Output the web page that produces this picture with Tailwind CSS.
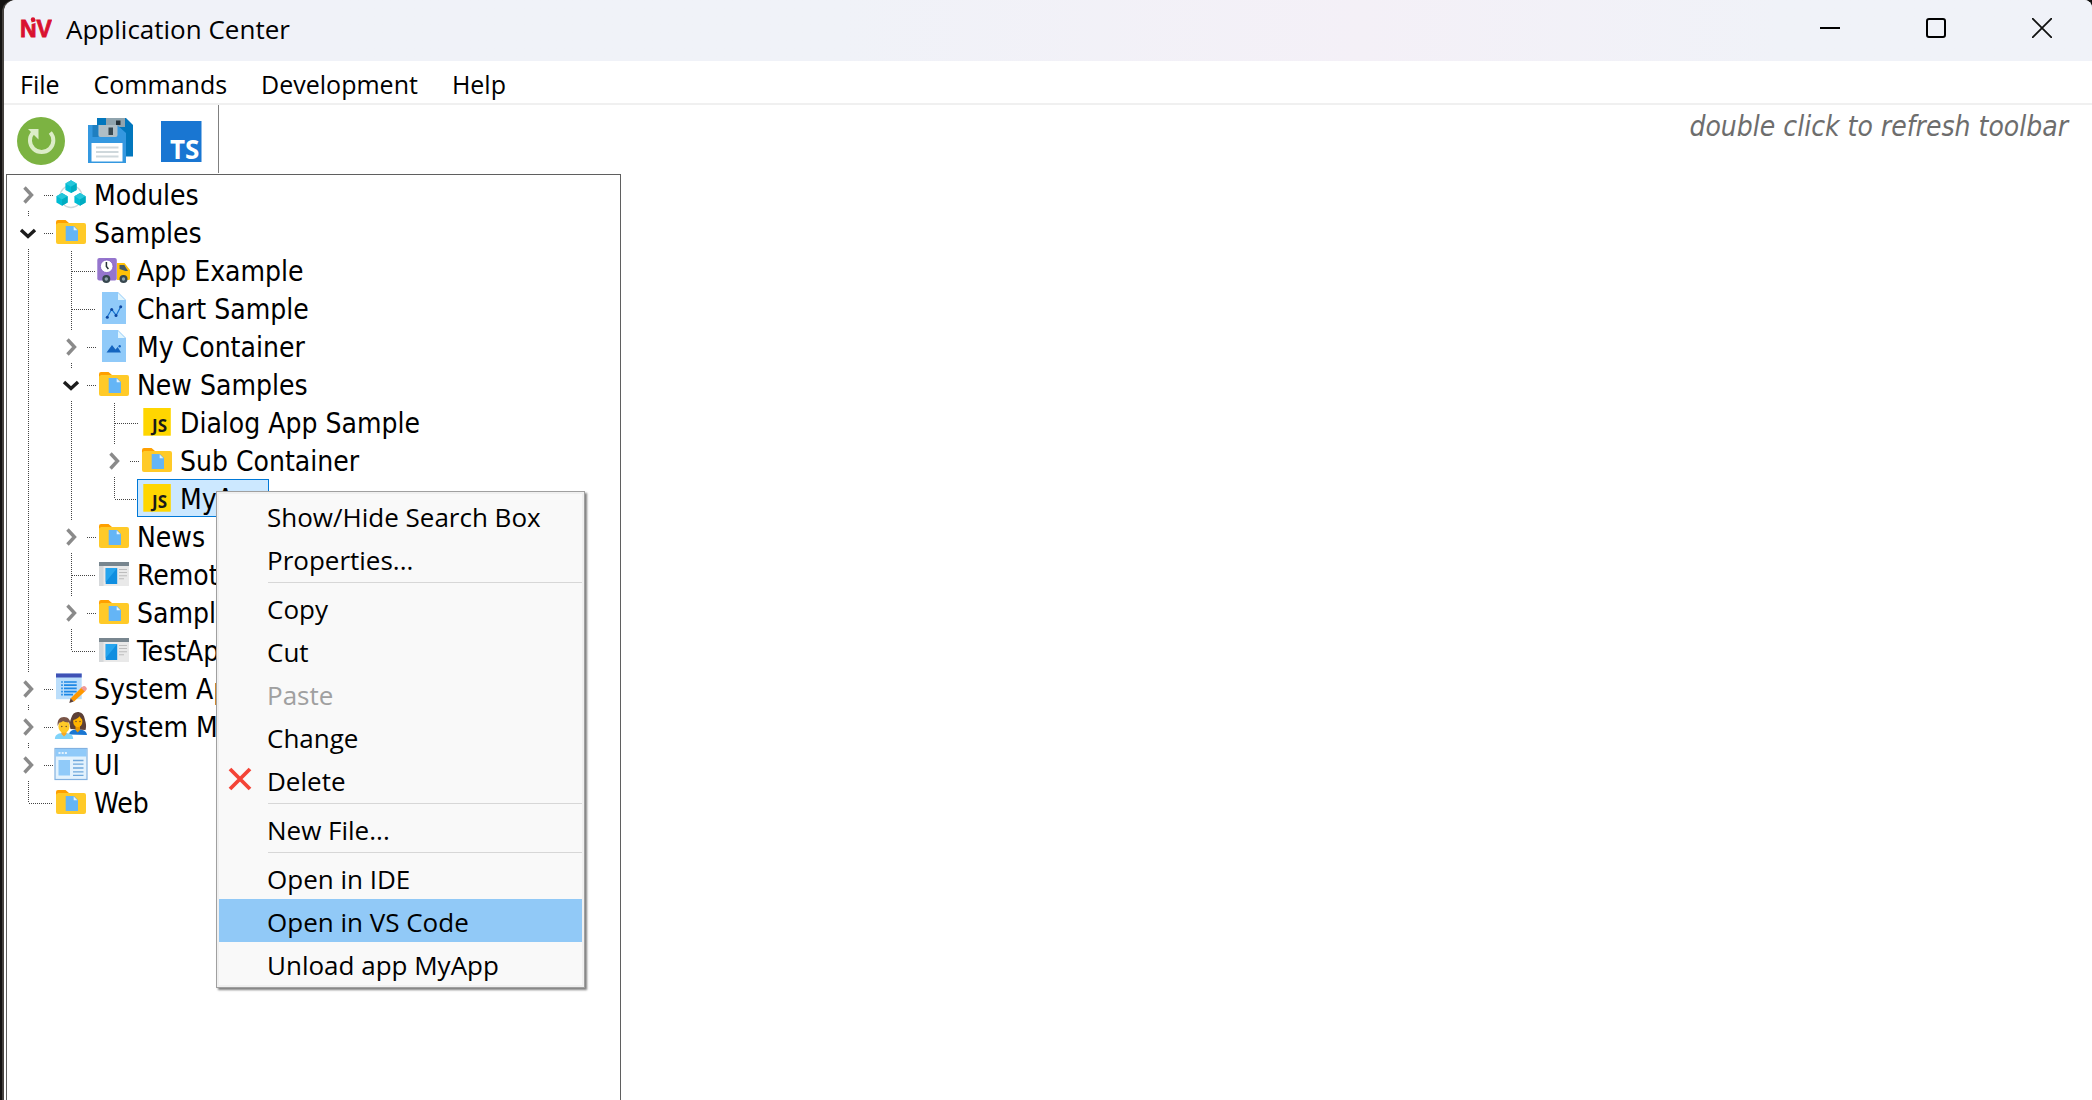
<!DOCTYPE html>
<html lang="en">
<head>
  <meta charset="UTF-8" />
  <meta name="viewport" content="width=device-width, initial-scale=1.0"/>
  <title>Application Center</title>
  <script src="https://cdn.jsdelivr.net/npm/@tailwindcss/browser@4"></script>
</head>
<body class="bg-[#141312] text-black font-['Open_Sans','Noto_Sans',sans-serif] text-[26px]">

  <!-- Shared icons -->
  <svg class="hidden" aria-hidden="true">
    <symbol id="ic-modules" viewBox="0 0 36 36">
      <circle cx="18" cy="20.500" r="11" fill="none" stroke="#cfd8dc" stroke-width="1.300"/>
      <g id="cube">
        <path d="M18 4.300l5.600 3.200v6.400L18 17.100l-5.600-3.200V7.500z" fill="#00bcd4"/>
        <path d="M18 4.300l5.600 3.200L18 10.700l-5.600-3.200z" fill="#26c6da"/>
        <path d="M18 10.700l5.600-3.200v6.400L18 17.100z" fill="#00acc1"/>
      </g>
      <use href="#cube" x="-9" y="12.700"/>
      <use href="#cube" x="9" y="12.700"/>
    </symbol>
    <symbol id="ic-folder" viewBox="0 0 36 36">
      <path d="M3 8a2 2 0 0 1 2-2h7.500l3.500 3h14v8H3z" fill="#ffa000"/>
      <path d="M5 9h26a2 2 0 0 1 2 2v17a2 2 0 0 1-2 2H5a2 2 0 0 1-2-2V10.500z" fill="#ffca28"/>
      <path d="M12.700 12H21l4 4v11H12.700z" fill="#64b5f6"/>
      <path d="M20.700 12.600v3.700h3.700z" fill="#e3f2fd"/>
    </symbol>
    <symbol id="ic-truck" viewBox="0 0 36 36">
      <path d="M21 11h7.500l5.500 7v8.500a1.500 1.500 0 0 1-1.500 1.500H21z" fill="#ffc107"/>
      <path d="M23.500 13h4.800l3.700 6h-2.500l-6-2z" fill="#455a64"/>
      <rect x="1.300" y="6" width="19.500" height="22.500" rx="2" fill="#9575cd"/>
      <circle cx="10.700" cy="14.300" r="6.300" fill="#fff" stroke="#7e57c2" stroke-width=".8"/>
      <path d="M10.400 10v4.500l2 2.500" fill="none" stroke="#263238" stroke-width="1.500"/>
      <circle cx="10.300" cy="27" r="4" fill="#37474f"/><circle cx="10.300" cy="27" r="1.700" fill="#90a4ae"/>
      <circle cx="27.500" cy="27" r="4" fill="#37474f"/><circle cx="27.500" cy="27" r="1.700" fill="#90a4ae"/>
    </symbol>
    <symbol id="ic-chart" viewBox="0 0 36 36">
      <path d="M6 2h16l8 8v24H6z" fill="#90caf9"/>
      <path d="M22 3v7h7z" fill="#e1f5fe"/>
      <path d="M11 27.300l4.700-8 4.500 6 4.500-8.600" fill="none" stroke="#1976d2" stroke-width="1.200"/>
      <g fill="#0d47a1"><circle cx="11.300" cy="27.300" r="1.500"/><circle cx="15.700" cy="19.500" r="1.500"/><circle cx="20" cy="25.500" r="1.500"/><circle cx="24.700" cy="16.700" r="1.500"/></g>
    </symbol>
    <symbol id="ic-image" viewBox="0 0 36 36">
      <path d="M6 2h16l8 8v24H6z" fill="#90caf9"/>
      <path d="M22 3v7h7z" fill="#e1f5fe"/>
      <path d="M10.500 24.500l5.500-7.500 3.500 4.500 2.200-2.500 3.300 5.500z" fill="#1565c0"/>
      <circle cx="23.700" cy="18.300" r="1.200" fill="#1565c0"/>
    </symbol>
    <symbol id="ic-js" viewBox="0 0 36 36">
      <rect x="4.300" y="4" width="27.500" height="27.700" fill="#ffd600"/>
      <text x="13" y="28" font-size="17" font-weight="700" font-family="Noto Sans, sans-serif" fill="#1a1a1a">JS</text>
    </symbol>
    <symbol id="ic-window" viewBox="0 0 36 36">
      <rect x="3" y="6" width="30" height="24" fill="#e9e9e9"/>
      <rect x="3" y="6" width="4.500" height="24" fill="#d5d8da"/>
      <rect x="3" y="6" width="30" height="4" fill="#78868f"/>
      <rect x="9.700" y="12" width="11.500" height="16" fill="#0f8ee0"/>
      <path d="M9.700 12h11.500L9.700 26z" fill="#26a5ee"/>
      <path d="M23 13.500h8M23 16.500h8M23 19.700h8M23 22.800h5" stroke="#bdbdbd" stroke-width="1.100"/>
    </symbol>
    <symbol id="ic-form" viewBox="0 0 36 36">
      <rect x="3" y="3.500" width="25.700" height="25.700" fill="#bbdefb"/>
      <rect x="3" y="3.500" width="25.700" height="4" fill="#3f51b5"/>
      <path d="M8.200 12h1.600M8.200 15.200h1.600M8.200 18.400h1.600M8.200 21.600h1.600M8.200 24.600h1.600M11 12h12.700M11 15.200h12.700M11 18.400h12.700M11 21.600h12.700M11 24.600h9" stroke="#1e88e5" stroke-width="1.700"/>
      <path d="M17.500 28.500L29 17l3.700 3.700L21 31.500z" fill="#ff9800"/>
      <path d="M28 18l2-1.700q1.500-1 3 .6t.500 2.800L31.700 21.500z" fill="#ef9a9a"/>
      <path d="M17.600 28.300l3.200 3.200-4.500 1.400z" fill="#5d4037"/>
    </symbol>
    <symbol id="ic-people" viewBox="0 0 36 36">
      <path d="M17.500 21c-1.500-4-.5-8 .7-11C19.300 6 21.500 4 24.700 4s6 2 6.800 6c.8 3.500 2.500 7 1 12z" fill="#5d4037"/>
      <path d="M16 26.500c.5-4 4-5 8.500-5s9 1 9.500 5.500z" fill="#1976d2"/>
      <path d="M22.500 18h4.500v4l-2.300 2.500-2.200-2.500z" fill="#e69500"/>
      <ellipse cx="24.800" cy="13.500" rx="4.600" ry="5.700" fill="#ffb300"/>
      <path d="M20 12c3-.5 5.500-2 6.500-4 1 2 2 3 3.200 3.500C30 7 27.500 6 25 6s-5 2-5 6z" fill="#5d4037"/>
      <path d="M1.900 31c0-5 4-6 9.100-6s9.200 1 9.200 6z" fill="#81d4fa"/>
      <path d="M8.500 23h5v3L11 28.500 8.500 26z" fill="#f9a825"/>
      <ellipse cx="11" cy="18.500" rx="5.600" ry="6.300" fill="#ffca28"/>
      <path d="M4.700 18c-.7-6 2-9 6.300-9s7 3 6.300 9l-1.300-3.500c-3 0-5-.8-6-1.500-1 1-3 1.500-4 2z" fill="#795548"/>
      <g fill="#5d4037"><circle cx="8.800" cy="18.500" r=".7"/><circle cx="13.200" cy="18.500" r=".7"/><circle cx="23" cy="13.500" r=".7"/><circle cx="27" cy="13.500" r=".7"/></g>
    </symbol>
    <symbol id="ic-ui" viewBox="0 0 36 36">
      <rect x="2" y="2.500" width="32" height="31" fill="#e3f2fd" stroke="#82b1e0" stroke-width="1.200"/>
      <rect x="2.500" y="3" width="31" height="7.500" fill="#90caf9"/>
      <path d="M5.500 7h2M8.700 7h2M11.900 7h2" stroke="#e3f2fd" stroke-width="2"/>
      <rect x="5.500" y="14" width="11.500" height="15.500" fill="#90caf9"/>
      <path d="M20 14.500h10.500M20 18.200h10.500M20 22h10.500M20 25.800h10.500M20 29.300h10.500" stroke="#6fa8dc" stroke-width="1.300"/>
    </symbol>

    <!-- Tree guides, one 43x38 cell each -->
    <symbol id="g-line" viewBox="0 0 46 38">
      <path d="M21.500 0V38" stroke="#444" stroke-dasharray="1 1"/>
    </symbol>
    <symbol id="g-tee" viewBox="0 0 46 38">
      <path d="M21.500 0V38M22 20.500H46" stroke="#444" stroke-dasharray="1 1"/>
    </symbol>
    <symbol id="g-corner" viewBox="0 0 46 38">
      <path d="M21.500 0V20M22 20.500H46" stroke="#444" stroke-dasharray="1 1"/>
    </symbol>
    <symbol id="g-first" viewBox="0 0 46 38">
      <path d="M21.500 36V38M37 20.500H46" stroke="#444" stroke-dasharray="1 1"/>
      <path d="M17.500 12.500l7 7.500-7 7.500" fill="none" stroke="#8a8a8a" stroke-width="3.400"/>
    </symbol>
    <symbol id="g-closed" viewBox="0 0 46 38">
      <path d="M21.500 0V3M21.500 36V38M37 20.500H46" stroke="#444" stroke-dasharray="1 1"/>
      <path d="M17.500 12.500l7 7.500-7 7.500" fill="none" stroke="#8a8a8a" stroke-width="3.400"/>
    </symbol>
    <symbol id="g-open" viewBox="0 0 46 38">
      <path d="M21.500 0V3M21.500 36V38M37 20.500H46" stroke="#444" stroke-dasharray="1 1"/>
      <path d="M14 17l7 6.500 7-6.500" fill="none" stroke="#1c1c1c" stroke-width="3.400"/>
    </symbol>
  </svg>

  <div class="h-screen pl-[2px] bg-[#141312]">
  <div class="h-full pl-[2px] bg-[#45423f] rounded-tl-xl rounded-tr-lg">
  <div class="h-full bg-white rounded-tl-xl rounded-tr-lg overflow-hidden flex flex-col">

    <!-- Title bar -->
    <header class="h-[61px] shrink-0 pl-4 flex items-start bg-linear-to-r from-[#f0f2f8] from-40% via-[#f4f0f7] via-65% to-[#f0f2f8] to-85%">
      <svg class="w-[32px] h-[56px]" viewBox="0 0 32 56" role="img" aria-label="NiV">
        <text x="0" y="37" font-size="23" fill="#d9122f" stroke="#d9122f" stroke-width=".8" font-family="Liberation Sans, Arial, sans-serif" font-weight="700">NV</text>
        <path d="M9 24l7-2" stroke="#f0f2f8" stroke-width="1.500"/>
        <circle cx="13" cy="19.500" r="2.200" fill="#d9122f"/>
      </svg>
      <h1 class="pl-[14px] leading-[58px]">Application Center</h1>
      <div class="ml-auto flex gap-[6px]">
        <button type="button" aria-label="Minimize" class="w-[100px] h-[56px] flex items-center justify-center">
          <svg class="size-[20px]" viewBox="0 0 20 20"><path d="M0 10h20" stroke="#000" stroke-width="2"/></svg>
        </button>
        <button type="button" aria-label="Maximize" class="w-[100px] h-[56px] flex items-center justify-center">
          <svg class="size-[20px]" viewBox="0 0 20 20"><rect x="1" y="1" width="18" height="18" rx="2" fill="none" stroke="#000" stroke-width="2"/></svg>
        </button>
        <button type="button" aria-label="Close" class="w-[100px] h-[56px] flex items-center justify-center">
          <svg class="size-[20px]" viewBox="0 0 20 20"><path d="M0 0l20 20M20 0L0 20" stroke="#111" stroke-width="1.800"/></svg>
        </button>
      </div>
    </header>

    <!-- Menu bar -->
    <nav class="h-[44px] shrink-0 pl-4 pt-[4px] flex gap-[34px] text-[25px] leading-[38px] border-b-2 border-[#f0f0f0]">
      <button type="button">File</button>
      <button type="button">Commands</button>
      <button type="button">Development</button>
      <button type="button">Help</button>
    </nav>

    <!-- Toolbar -->
    <div class="h-[69px] shrink-0 pl-3 flex items-start">
      <div class="h-[68px] pt-[4px] flex items-center gap-[21px] pr-[14px] border-r border-[#808080]">
        <button type="button" aria-label="Refresh">
          <svg class="size-[50px]" viewBox="0 0 50 50">
            <circle cx="25" cy="25" r="24" fill="#7cb342"/>
            <path d="M34.300 16.500A11.700 11.700 0 1 1 17 16.500" fill="none" stroke="#dcedc8" stroke-width="4"/>
            <path d="M12 13h10.500v10.500z" fill="#dcedc8"/>
          </svg>
        </button>
        <button type="button" aria-label="Save all">
          <svg class="size-[48px]" viewBox="0 0 48 48">
            <path d="M10 1h29l7 7v31.500H10z" fill="#0277bd"/>
            <path d="M19 1h19v9H19z" fill="#90a4ae"/><path d="M29 3.500h4.500V8H29z" fill="#263238"/>
            <path d="M1 8h29l9 8v30H1z" fill="#3498e0"/>
            <path d="M5.500 8h6v12h-6z" fill="#1f7fc0"/>
            <path d="M11.500 8h19v10a2 2 0 0 1-2 2h-15a2 2 0 0 1-2-2z" fill="#b0bec5"/>
            <path d="M21.500 10.500h4.500v7.500h-4.500z" fill="#37474f"/>
            <path d="M4.500 26h31v18.500h-31z" fill="#fff"/>
            <path d="M9 30.500h22.500M9 35h22.500M9 39.500h22.500" stroke="#cfd8dc" stroke-width="1.800"/>
          </svg>
        </button>
        <button type="button" aria-label="TypeScript">
          <svg class="size-[48px]" viewBox="0 0 48 48">
            <rect x="5" y="4" width="40.500" height="41" fill="#1976d2"/>
            <text x="14" y="42" font-size="26" font-weight="700" font-family="Open Sans, Noto Sans, sans-serif" fill="#fff">TS</text>
          </svg>
        </button>
      </div>
      <p class="ml-auto pr-[24px] pt-[2px] leading-[40px] text-[28px] italic text-[#6d6d6d] font-['DejaVu_Sans_Condensed','DejaVu_Sans',sans-serif]">double click to refresh toolbar</p>
    </div>

    <!-- Application tree -->
    <main class="grow min-h-0 pl-[2px] flex">
      <ul id="tree" class="w-[615px] border border-b-0 border-[#5f5f5f] text-[28px] leading-[36px] whitespace-nowrap overflow-hidden font-['DejaVu_Sans_Condensed','DejaVu_Sans',sans-serif]"></ul>
    </main>
  </div>
  </div>
  </div>

  <!-- Context menu -->
  <div role="menu" class="absolute left-[216px] top-[491px] w-[369px] border border-[#a0a0a0] bg-[#f0f0f0] p-[2px] shadow-[2px_2px_2px_rgba(0,0,0,0.5)]">
    <div id="menu" class="bg-[#f9f9f9] flex flex-col leading-[38px]"></div>
  </div>

  <script>
    // guides: one cell per level, left to right
    const nodes = [
      { name: 'Modules', icon: 'modules', guides: ['first'] },
      { name: 'Samples', icon: 'folder', guides: ['open'] },
      { name: 'App Example', icon: 'truck', guides: ['line', 'tee'] },
      { name: 'Chart Sample', icon: 'chart', guides: ['line', 'tee'] },
      { name: 'My Container', icon: 'image', guides: ['line', 'closed'] },
      { name: 'New Samples', icon: 'folder', guides: ['line', 'open'] },
      { name: 'Dialog App Sample', icon: 'js', guides: ['line', 'line', 'tee'] },
      { name: 'Sub Container', icon: 'folder', guides: ['line', 'line', 'closed'] },
      { name: 'MyApp', icon: 'js', guides: ['line', 'line', 'corner'], selected: true },
      { name: 'News', icon: 'folder', guides: ['line', 'closed'] },
      { name: 'Remote', icon: 'window', guides: ['line', 'tee'] },
      { name: 'Samples', icon: 'folder', guides: ['line', 'closed'] },
      { name: 'TestApp', icon: 'window', guides: ['line', 'corner'] },
      { name: 'System Apps', icon: 'form', guides: ['closed'] },
      { name: 'System Modules', icon: 'people', guides: ['closed'] },
      { name: 'UI', icon: 'ui', guides: ['closed'] },
      { name: 'Web', icon: 'folder', guides: ['corner'] }
    ];

    document.getElementById('tree').innerHTML = nodes.map(node => `
      <li class="h-[38px] flex">
        ${node.guides.map(g => `<svg class="w-[46px] h-[38px] -mr-[3px] shrink-0"><use href="#g-${g}"/></svg>`).join('')}
        <button type="button" class="${node.selected ? 'ml-px pr-[2px] flex items-center border border-[#0078d7] bg-[#cce8ff]' : 'ml-px px-px flex items-center'}">
          <svg class="w-[36px] h-[36px] mx-px shrink-0"><use href="#ic-${node.icon}"/></svg>
          <span class="pl-[4px] pt-[3px]">${node.name}</span>
        </button>
      </li>`).join('');

    const items = [
      'Show/Hide Search Box', 'Properties...', '-',
      'Copy', 'Cut', 'Paste', 'Change', 'Delete', '-',
      'New File...', '-',
      'Open in IDE', 'Open in VS Code', 'Unload app MyApp'
    ];

    const cross = '<svg class="size-[24px] ml-[9px] mb-[2px]" viewBox="0 0 24 24"><path d="M2 2l20 20M22 2L2 22" stroke="#f44336" stroke-width="3.800"/></svg>';

    document.getElementById('menu').innerHTML = items.map(item => {
      if (item === '-') return '<div role="separator" class="h-[6px] pt-[2px] pl-[49px]"><div class="h-px bg-[#d7d7d7]"></div></div>';
      let style = 'h-[43px] flex items-center text-left';
      if (item === 'Paste') style = 'h-[43px] flex items-center text-left text-[#a0a0a0]';
      if (item === 'Open in VS Code') style = 'h-[43px] flex items-center text-left bg-[#91c9f7]';
      return `
        <button type="button" role="menuitem" class="${style}" ${item === 'Paste' ? 'disabled' : ''}>
          <span class="w-[48px]">${item === 'Delete' ? cross : ''}</span>
          <span class="pt-[2px]">${item}</span>
        </button>`;
    }).join('');
  </script>
</body>
</html>
